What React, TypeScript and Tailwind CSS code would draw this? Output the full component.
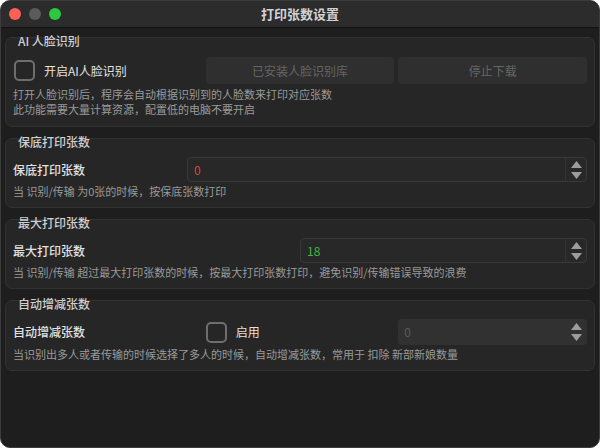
import React from 'react'

const font = { fontFamily: '"Noto Sans CJK SC", "Noto Sans", sans-serif' }

function Checkbox() {
  return <div className="h-[21px] w-[21px] shrink-0 rounded-[5px] border-2 border-[#6e6e6e]" />
}

function Spinner() {
  return (
    <div className="flex w-[21px] flex-col items-center justify-center gap-[4px] border-l border-[#333333]">
      <svg width="11" height="7" viewBox="0 0 11 7">
        <path d="M5.5 0 L11 7 L0 7 Z" fill="#9c9c9c" />
      </svg>
      <svg width="11" height="7" viewBox="0 0 11 7">
        <path d="M0 0 L11 0 L5.5 7 Z" fill="#9c9c9c" />
      </svg>
    </div>
  )
}

function NumberInput({ value, color, disabled }: { value: string; color: string; disabled?: boolean }) {
  return (
    <div
      className={
        disabled
          ? 'flex h-[26px] rounded-[4px] bg-[#313131]'
          : 'flex h-[25px] rounded-[4px] border border-[#393939] bg-[#282828]'
      }
    >
      <div className={`flex flex-1 items-center pl-[6px] text-[12px] ${color}`}>{value}</div>
      {disabled ? (
        <div className="flex w-[21px] flex-col items-center justify-center gap-[4px]">
          <svg width="11" height="7" viewBox="0 0 11 7">
            <path d="M5.5 0 L11 7 L0 7 Z" fill="#9c9c9c" />
          </svg>
          <svg width="11" height="7" viewBox="0 0 11 7">
            <path d="M0 0 L11 0 L5.5 7 Z" fill="#9c9c9c" />
          </svg>
        </div>
      ) : (
        <Spinner />
      )}
    </div>
  )
}

function GroupBox({ title, children }: { title: string; children: React.ReactNode }) {
  return (
    <section className="rounded-[7px] border border-[#323232] bg-[#262626] px-[7px]">
      <div className="-mt-[4px] pl-[5px] text-[12px] leading-[14px] font-medium text-[#cfcfcf]">{title}</div>
      {children}
    </section>
  )
}

function Hint({ children }: { children: React.ReactNode }) {
  return <p className="text-[11px] leading-[15px] text-[#9a9a9a]">{children}</p>
}

export default function App() {
  return (
    <div className="h-[448px] w-[600px] bg-white" style={font}>
      <div className="flex h-full w-full flex-col overflow-hidden rounded-[10px] border border-[#3c3c3c] bg-[#1e1e1e]">
        <header className="relative flex h-[27px] shrink-0 items-center justify-center border-b border-[#121212] bg-[#2c2c2c]">
          <div className="absolute left-[8px] top-[7px] flex gap-[8px]">
            <span className="h-[12px] w-[12px] rounded-full bg-[#fe5f57]" />
            <span className="h-[12px] w-[12px] rounded-full bg-[#5b5b5b]" />
            <span className="h-[12px] w-[12px] rounded-full bg-[#2bc840]" />
          </div>
          <h1 className="text-[13px] font-bold text-[#d2d2d2]">打印张数设置</h1>
        </header>

        <main className="flex flex-col gap-[11px] px-[4px] pt-[9px]">
          <GroupBox title="AI 人脸识别">
            <div className="mt-[9px] grid h-[27px] grid-cols-3 gap-[4px]">
              <div className="flex items-center gap-[9px] pl-[1px]">
                <Checkbox />
                <span className="text-[12px] text-[#e2e2e2]">开启AI人脸识别</span>
              </div>
              <button className="rounded-[4px] bg-[#2f2f2f] text-[12px] text-[#656565]">已安装人脸识别库</button>
              <button className="rounded-[4px] bg-[#2f2f2f] text-[12px] text-[#656565]">停止下载</button>
            </div>
            <div className="mt-[3px] pb-[9px]">
              <Hint>打开人脸识别后，程序会自动根据识别到的人脸数来打印对应张数</Hint>
              <Hint>此功能需要大量计算资源，配置低的电脑不要开启</Hint>
            </div>
          </GroupBox>

          <GroupBox title="保底打印张数">
            <div className="mt-[8px] grid grid-cols-[1fr_400px] items-center">
              <span className="text-[12px] font-medium text-[#e2e2e2]">保底打印张数</span>
              <NumberInput value="0" color="text-[#d9473f]" />
            </div>
            <div className="mt-[2px] pb-[8px]">
              <Hint>当 识别/传输 为0张的时候，按保底张数打印</Hint>
            </div>
          </GroupBox>

          <GroupBox title="最大打印张数">
            <div className="mt-[8px] grid grid-cols-2 items-center">
              <span className="text-[12px] font-medium text-[#e2e2e2]">最大打印张数</span>
              <NumberInput value="18" color="text-[#3fb53f]" />
            </div>
            <div className="mt-[2px] pb-[8px]">
              <Hint>当 识别/传输 超过最大打印张数的时候，按最大打印张数打印，避免识别/传输错误导致的浪费</Hint>
            </div>
          </GroupBox>

          <GroupBox title="自动增减张数">
            <div className="mt-[8px] grid grid-cols-3 items-center gap-[4px]">
              <span className="text-[12px] font-medium text-[#e2e2e2]">自动增减张数</span>
              <div className="flex items-center gap-[9px]">
                <Checkbox />
                <span className="text-[12px] text-[#e2e2e2]">启用</span>
              </div>
              <NumberInput value="0" color="text-[#5c5c5c]" disabled />
            </div>
            <div className="mt-[2px] pb-[8px]">
              <Hint>当识别出多人或者传输的时候选择了多人的时候，自动增减张数，常用于 扣除 新部新娘数量</Hint>
            </div>
          </GroupBox>
        </main>
      </div>
    </div>
  )
}
